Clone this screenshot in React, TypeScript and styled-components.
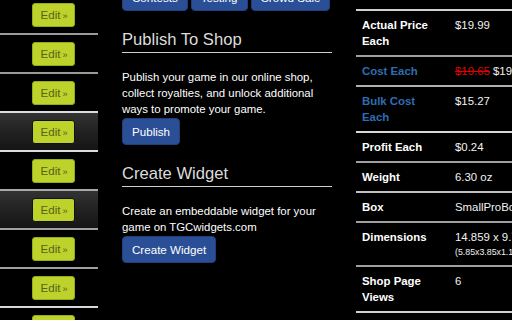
import React from 'react';
import styled, { createGlobalStyle } from 'styled-components';

const GlobalStyle = createGlobalStyle`
  html, body {
    margin: 0;
    padding: 0;
    background: #000;
  }
  body {
    font-family: "Liberation Sans", Arial, sans-serif;
    color: #fff;
  }
`;

const Page = styled.div`
  width: 512px;
  height: 320px;
  overflow: hidden;
  display: flex;
  align-items: flex-start;
  gap: 24px;
  background: #000;
`;

const EditList = styled.div`
  width: 98px;
  flex: none;
  margin-top: -4px;
`;

const EditRow = styled.div<{ $active?: boolean; $line: string }>`
  height: 30px;
  padding: 7px 0 0 32px;
  border-bottom: 2px solid ${(p) => p.$line};
  background: ${(p) =>
    p.$active ? 'linear-gradient(#333 0%, #222 50%, #151515 100%)' : 'transparent'};
`;

const EditButton = styled.button<{ $active?: boolean }>`
  width: 43px;
  height: 24px;
  padding: 0 0 0 1px;
  box-sizing: border-box;
  border: 1px solid ${(p) => (p.$active ? '#111' : '#97aa1c')};
  border-radius: 3px;
  background: #bdd22b;
  color: #56611c;
  font-family: "Liberation Sans", Arial, sans-serif;
  font-size: 11.5px;
  line-height: 22px;
  text-align: center;
  white-space: nowrap;
  cursor: pointer;
  span {
    font-size: 9px;
    margin-left: 2px;
  }
`;

const Middle = styled.div`
  width: 210px;
  flex: none;
  margin-top: -16px;
`;

const ButtonRow = styled.div`
  display: flex;
  gap: 3px;
`;

const BlueButton = styled.button`
  height: 27px;
  padding: 0 9px;
  border: 1px solid #203f7c;
  border-radius: 4px;
  background: #2a4f96;
  color: #fff;
  font-family: "Liberation Sans", Arial, sans-serif;
  font-size: 11.6px;
  line-height: 25px;
  cursor: pointer;
`;

const Section = styled.section`
  margin-top: 19px;
`;

const Heading = styled.h2`
  margin: 0;
  padding-bottom: 2px;
  border-bottom: 1px solid #d0d0d0;
  font-size: 16.6px;
  line-height: 20px;
  font-weight: normal;
  color: #dcdcdc;
`;

const Text = styled.p`
  margin: 16px 0 1px;
  font-size: 11.4px;
  line-height: 16px;
  color: #fff;
`;

const Details = styled.div`
  width: 260px;
  flex: none;
  margin-top: -19px;
`;

const DetailRow = styled.div<{ $line: string }>`
  display: flex;
  border-bottom: 2px solid ${(p) => p.$line};
  font-size: 11.4px;
  line-height: 16px;
`;

const Label = styled.div<{ $blue?: boolean }>`
  width: 80px;
  flex: none;
  padding: 6px 7px 6px 6px;
  font-weight: bold;
  color: ${(p) => (p.$blue ? '#2f6cb3' : '#fff')};
`;

const Value = styled.div`
  padding: 6px;
  white-space: nowrap;
  color: #f2f2f2;
`;

const Old = styled.span`
  color: #e00000;
  text-decoration: line-through;
`;

const Small = styled.div`
  font-size: 8.8px;
  line-height: 14px;
`;

const editRows = [
  { line: '#9a9a9a' },
  { line: '#9a9a9a' },
  { line: '#dcdcdc' },
  { line: '#dcdcdc', active: true },
  { line: '#a8a8a8' },
  { line: '#a0a0a0', active: true },
  { line: '#a0a0a0' },
  { line: '#d8d8d8' },
  { line: '#a0a0a0' },
];

function App() {
  return (
    <>
      <GlobalStyle />
      <Page>
        <EditList>
          {editRows.map((row, i) => (
            <EditRow key={i} $line={row.line} $active={row.active}>
              <EditButton $active={row.active}>
                Edit<span>»</span>
              </EditButton>
            </EditRow>
          ))}
        </EditList>

        <Middle>
          <ButtonRow>
            <BlueButton>Contests</BlueButton>
            <BlueButton>Testing</BlueButton>
            <BlueButton>Crowd Sale</BlueButton>
          </ButtonRow>

          <Section>
            <Heading>Publish To Shop</Heading>
            <Text>
              Publish your game in our online shop, collect royalties, and
              unlock additional ways to promote your game.
            </Text>
            <BlueButton>Publish</BlueButton>
          </Section>

          <Section>
            <Heading>Create Widget</Heading>
            <Text>
              Create an embeddable widget for your game on TGCwidgets.com
            </Text>
            <BlueButton>Create Widget</BlueButton>
          </Section>
        </Middle>

        <Details>
          <DetailRow $line="#d0d0d0">
            <Label>MSRP Each</Label>
            <Value>$19.99</Value>
          </DetailRow>
          <DetailRow $line="#a0a0a0">
            <Label>Actual Price Each</Label>
            <Value>$19.99</Value>
          </DetailRow>
          <DetailRow $line="#b0b0b0">
            <Label $blue>Cost Each</Label>
            <Value>
              <Old>$19.65</Old> $19.27
            </Value>
          </DetailRow>
          <DetailRow $line="#d8d8d8">
            <Label $blue>Bulk Cost Each</Label>
            <Value>$15.27</Value>
          </DetailRow>
          <DetailRow $line="#a0a0a0">
            <Label>Profit Each</Label>
            <Value>$0.24</Value>
          </DetailRow>
          <DetailRow $line="#c0c0c0">
            <Label>Weight</Label>
            <Value>6.30 oz</Value>
          </DetailRow>
          <DetailRow $line="#a0a0a0">
            <Label>Box</Label>
            <Value>SmallProBox</Value>
          </DetailRow>
          <DetailRow $line="#a0a0a0">
            <Label>Dimensions</Label>
            <Value>
              14.859 x 9.779 x 2.794 cm
              <Small>(5.85x3.85x1.1 in)</Small>
            </Value>
          </DetailRow>
          <DetailRow $line="#d0d0d0">
            <Label>Shop Page Views</Label>
            <Value>6</Value>
          </DetailRow>
        </Details>
      </Page>
    </>
  );
}

export default App;
